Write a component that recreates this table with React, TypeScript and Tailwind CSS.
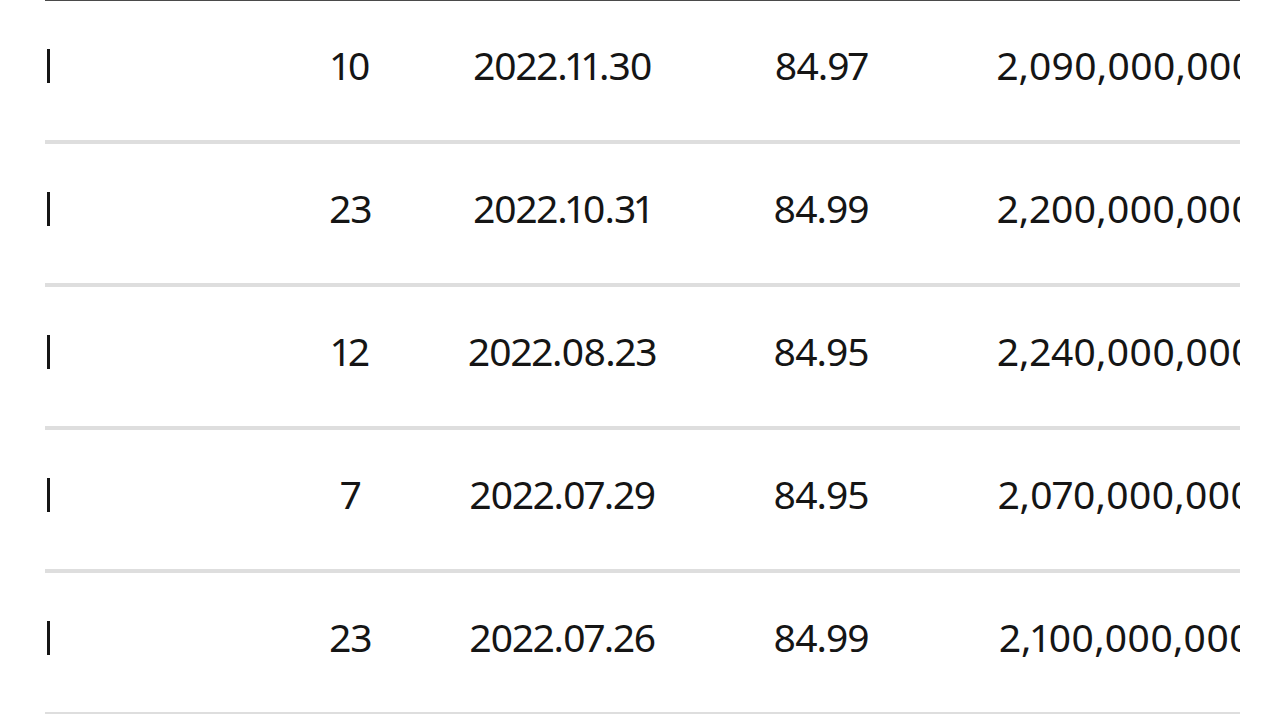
import React from 'react';

const rows = [
    { floor: '10', date: '2022.11.30', area: '84.97', price: '2,090,000,000' },
    { floor: '23', date: '2022.10.31', area: '84.99', price: '2,200,000,000' },
    { floor: '12', date: '2022.08.23', area: '84.95', price: '2,240,000,000' },
    { floor: '7', date: '2022.07.29', area: '84.95', price: '2,070,000,000' },
    { floor: '23', date: '2022.07.26', area: '84.99', price: '2,100,000,000' },
];

export default function App() {
    return (
        <div
            className="w-full h-[714px] bg-white pl-[45px] overflow-hidden"
            style={{ fontFamily: '"Noto Sans", "Open Sans", sans-serif' }}
        >
            {/* table, scrolled sideways so the last column is cut off */}
            <div className="w-[1195px] overflow-hidden border-t border-[#4a4a4a]">
                <div className="w-[1300px] text-[39px] text-[#151515] proportional-nums">
                    {rows.map((row, i) => (
                        <div key={i} className="flex h-[143px] border-b-4 border-[#dedede]">
                            <div className="w-[229px] shrink-0 flex items-center pb-[11px] pl-[2px]">
                                <span className="block w-[3px] h-[34px] bg-[#151515] mt-[1px]" />
                            </div>
                            <div className="w-[153px] shrink-0 flex items-center justify-center pb-[11px] tracking-[-1px]">
                                {row.floor}
                            </div>
                            <div className="w-[271px] shrink-0 flex items-center justify-center pb-[11px] tracking-[-1px]">
                                {row.date}
                            </div>
                            <div className="w-[246px] shrink-0 flex items-center justify-center pb-[11px] tracking-[-1px]">
                                {row.area}
                            </div>
                            <div className="w-[363px] shrink-0 flex items-center justify-center pb-[11px] whitespace-nowrap">
                                {row.price}
                            </div>
                        </div>
                    ))}
                </div>
            </div>
        </div>
    );
}
